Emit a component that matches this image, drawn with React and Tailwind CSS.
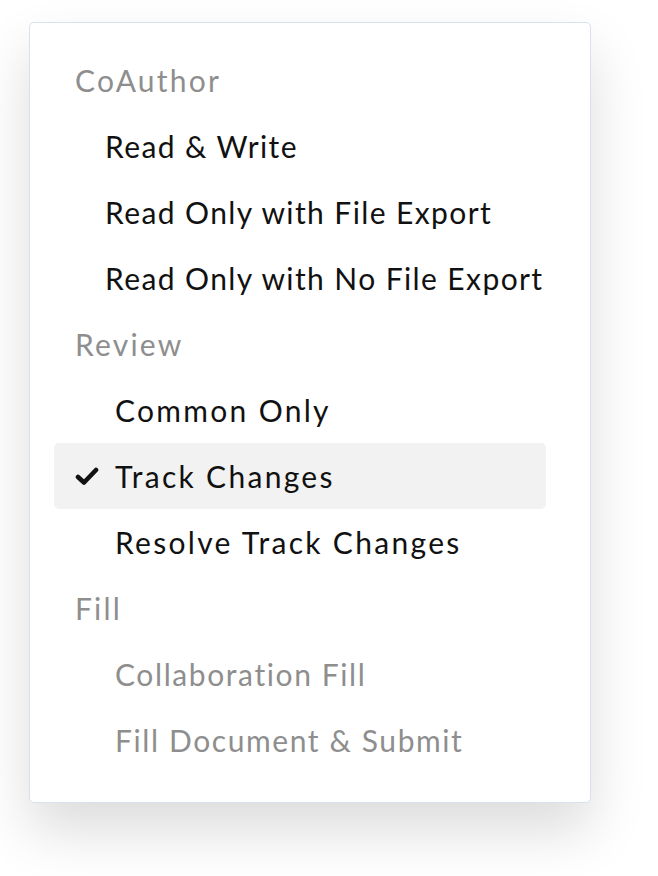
import React from 'react';

const sections = [
  {
    title: 'CoAuthor',
    indent: 'pl-[51px] tracking-[1.4px]',
    items: [
      { label: 'Read & Write' },
      { label: 'Read Only with File Export' },
      { label: 'Read Only with No File Export' },
    ],
  },
  {
    title: 'Review',
    indent: 'pl-[61px] tracking-[2.3px]',
    items: [
      { label: 'Common Only' },
      { label: 'Track Changes', checked: true },
      { label: 'Resolve Track Changes' },
    ],
  },
  {
    title: 'Fill',
    indent: 'pl-[61px] tracking-[1.6px]',
    items: [
      { label: 'Collaboration Fill', disabled: true },
      { label: 'Fill Document & Submit', disabled: true },
    ],
  },
];

const Check = () => (
  <svg
    className="absolute left-[21px] top-1/2 -translate-y-1/2"
    width="24"
    height="19"
    viewBox="0 0 24 19"
    fill="none"
  >
    <path
      d="M3 10.5 L9 16 L21 3.5"
      stroke="#111"
      strokeWidth="4.6"
      strokeLinecap="round"
      strokeLinejoin="round"
    />
  </svg>
);

const App = () => {
  return (
    <div
      className="w-[658px] h-[876px] bg-white pt-[22px] pl-[29px]"
      style={{ fontFamily: 'Lato, "Open Sans", sans-serif' }}
    >
      {/* Menu card */}
      <div className="w-[562px] h-[781px] bg-white border border-[#d8e1ec] rounded-[5px] shadow-[0_28px_55px_rgba(0,0,0,0.14)] pt-[24px] pl-[24px]">
        {sections.map((section) => (
          <div key={section.title}>
            <div className="h-[66px] w-[492px] flex items-center pl-[21px] text-[30px] tracking-[2.2px] text-[#8e8e8e]">
              {section.title}
            </div>
            {section.items.map((item) => (
              <div
                key={item.label}
                className={`relative h-[66px] w-[492px] flex items-center ${section.indent} text-[30px] rounded-[5px] ${
                  item.checked ? 'bg-[#f2f2f2]' : ''
                } ${item.disabled ? 'text-[#8e8e8e]' : 'text-[#111111]'}`}
              >
                {item.checked && <Check />}
                {item.label}
              </div>
            ))}
          </div>
        ))}
      </div>
    </div>
  );
};

export default App;
